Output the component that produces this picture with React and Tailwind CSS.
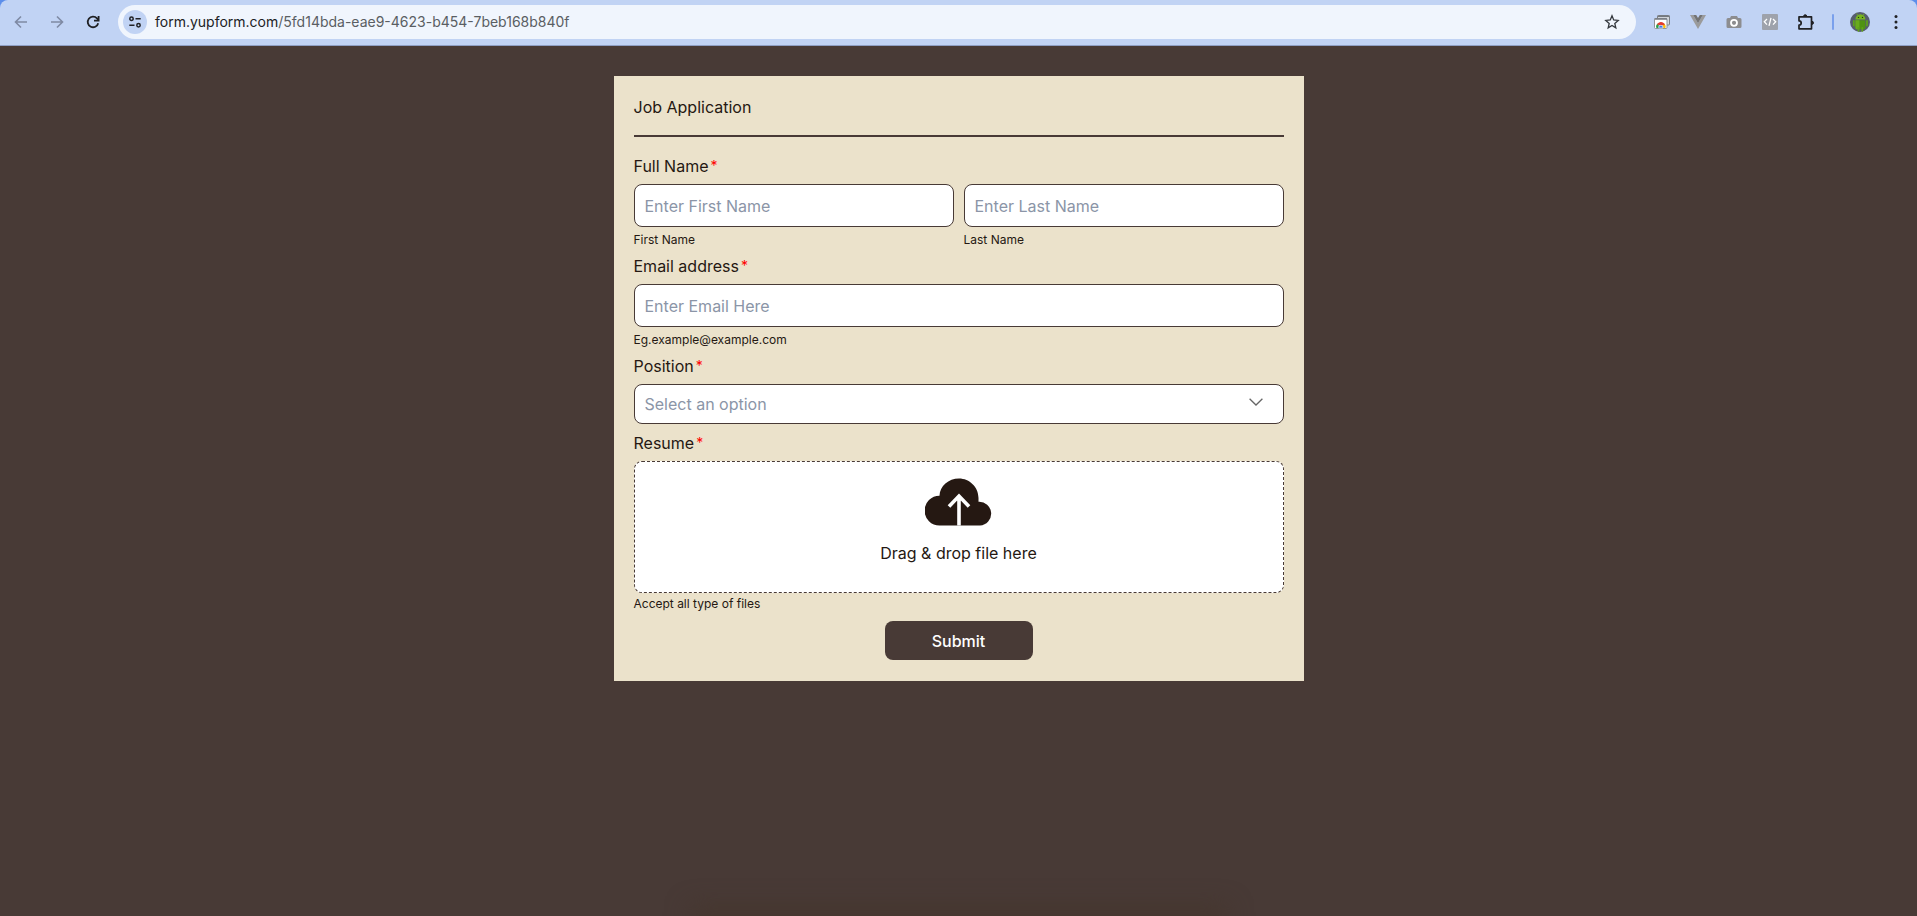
import React, { useState } from 'react';

const URL_HOST = 'form.yupform.com';
const URL_PATH = '/5fd14bda-eae9-4623-b454-7beb168b840f';

const inputClass =
  'w-full h-[43px] px-2.5 rounded-lg border border-[#483a36] bg-white text-base text-[#251812] placeholder:text-[#8b95a7] focus:outline-none';

function IconButton({ label, children }) {
  return (
    <button type="button" aria-label={label} className="flex h-6 w-6 items-center justify-center">
      {children}
    </button>
  );
}

function BrowserBar() {
  return (
    <div className="bg-[#5c8eea]">
      <header className="flex h-[46px] items-center rounded-t-lg border-b border-[#8f9fc4] bg-[#c1d3f4] pr-[9px] pb-px pl-[9px]">
        <nav className="flex items-center gap-3 pr-[13px] text-[#202124]">
          <IconButton label="Back">
            <svg width="14" height="14" viewBox="0 0 14 14" fill="none" stroke="#7f8aa3" strokeWidth="1.6">
              <path d="M13 7H2M7 1.5 1.5 7 7 12.5" />
            </svg>
          </IconButton>
          <IconButton label="Forward">
            <svg width="14" height="14" viewBox="0 0 14 14" fill="none" stroke="#7f8aa3" strokeWidth="1.6">
              <path d="M1 7h11M7 1.5 12.5 7 7 12.5" />
            </svg>
          </IconButton>
          <IconButton label="Reload">
            <svg width="14" height="14" viewBox="0 0 14 14" fill="none" stroke="currentColor" strokeWidth="1.8">
              <path d="M12.2 8.2A5.3 5.3 0 1 1 11 3.4L12.4 5" />
              <path d="M12.6 1v4.6H8" />
            </svg>
          </IconButton>
        </nav>

        <div className="flex h-[34px] flex-1 items-center rounded-full bg-[#f0f5fd] pr-3 pl-[5px]">
          <button
            type="button"
            aria-label="Site information"
            className="flex h-6 w-6 items-center justify-center rounded-full bg-[#c1d3f4]"
          >
            <svg width="14" height="12" viewBox="0 0 14 12" fill="none" stroke="#202124" strokeWidth="1.5">
              <circle cx="3.5" cy="2.7" r="1.7" />
              <path d="M7.5 2.7h5.2M1.3 9.3h5.2" />
              <circle cx="10.5" cy="9.3" r="1.7" />
            </svg>
          </button>
          <p className="flex-1 pl-2 text-sm text-[#5a5e63]">
            <span className="text-[#202124]">{URL_HOST}</span>
            {URL_PATH}
          </p>
          <IconButton label="Bookmark this page">
            <svg width="16" height="16" viewBox="0 0 16 16" fill="none" stroke="#33373d" strokeWidth="1.3" strokeLinejoin="miter">
              <path d="m8 1.8 1.7 4.2 4.5.4-3.4 3 1 4.4L8 11.4l-3.8 2.4 1-4.4-3.4-3L6.3 6z" />
            </svg>
          </IconButton>
        </div>

        <div className="flex items-center gap-3 pl-3.5">
          <IconButton label="Screen capture">
            <svg width="16" height="16" viewBox="0 0 16 16">
              <rect x="3.5" y="1.5" width="12" height="9.5" rx="1" fill="#d5d9de" stroke="#7b8086" />
              <path d="M3.500 2.300h12" stroke="#74797f" strokeWidth="1.500" />
              <rect x=".5" y="4.500" width="12.500" height="10" rx="1" fill="#fff" stroke="#8f959b" />
              <path d="M.5 5h12.500" stroke="#74797f" strokeWidth="1.500" />
              <path d="M2.400 14a4.500 4.500 0 0 1 .9-4.400L6.800 14z" fill="#2ba24c" />
              <path d="M10.400 9.600a4.500 4.500 0 0 1 .9 4.400H6.800z" fill="#fbbc05" />
              <path d="M2.900 10.200a4.700 4.700 0 0 1 8 .3L6.800 12z" fill="#e23b2e" />
              <path d="M4.700 14a2.200 2.200 0 1 1 4.300 0z" fill="#3b78e7" stroke="#fff" strokeWidth=".6" />
            </svg>
          </IconButton>
          <IconButton label="Vue devtools">
            <svg width="16" height="14" viewBox="0 0 16 14">
              <path d="M0 0h3.2L8 8.3 12.8 0H16L8 14z" fill="#9b9b9b" />
              <path d="M3.2 0h3L8 3.1 9.8 0h3L8 8.3z" fill="#747474" />
            </svg>
          </IconButton>
          <IconButton label="Screenshot">
            <svg width="16" height="16" viewBox="0 0 16 16">
              <path d="M5 2h6l1 2h2a1.5 1.5 0 0 1 1.5 1.5v7A1.5 1.5 0 0 1 14 14H2a1.5 1.5 0 0 1-1.5-1.5v-7A1.5 1.5 0 0 1 2 4h2z" fill="#8d8d8f" />
              <circle cx="8" cy="8.8" r="3" fill="#8d8d8f" stroke="#fff" strokeWidth="1.8" />
            </svg>
          </IconButton>
          <IconButton label="Page source">
            <svg width="16" height="16" viewBox="0 0 16 16" fill="none">
              <rect width="16" height="16" rx="1" fill="#9ea2ab" />
              <path d="M5 5 2.3 7.8 5 10.6M11 5l2.7 2.8L11 10.6M9 3.8 7 11.8" stroke="#fff" strokeWidth="1.3" />
            </svg>
          </IconButton>
          <IconButton label="Extensions">
            <svg width="18" height="18" viewBox="0 0 18 18" fill="none" stroke="#202124" strokeWidth="1.7">
              <path d="M2 3.8h12.5v12H2v-3.6a2.2 2.2 0 0 0 0-4.4z" strokeLinejoin="round" />
              <path d="M6.7 3.2a1.5 1.5 0 0 1 3 0zM15 8.3a1.5 1.5 0 0 1 0 3z" fill="#202124" strokeWidth="1" />
            </svg>
          </IconButton>
        </div>

        <span className="ml-3.5 h-4 w-0.5 rounded-full bg-[#7aa0ec]" />

        <div className="flex items-center gap-3 pl-3.5">
          <IconButton label="Profile">
            <svg width="20" height="20" viewBox="0 0 20 20">
              <circle cx="10" cy="10" r="10" fill="#565d6e" />
              <path d="M5.4 7.6a5 5.4 0 0 1 10 0z" fill="#77b61f" />
              <path d="M5.4 8.3h10v7.500a1.5 1.5 0 0 1-1.5 1.5H6.900a1.5 1.5 0 0 1-1.5-1.500z" fill="#4f9312" />
              <path d="M5.400 8.300h4v9h-2.500a1.500 1.500 0 0 1-1.500-1.500z" fill="#69ab1c" />
              <path d="M3.800 9v4.5M17 9v4.5M8.5 16v2.800M12.3 16v2.800" stroke="#5fa31a" strokeWidth="1.8" strokeLinecap="round" />
              <path d="m7.5 3-.9-1.500M13.3 3l.9-1.500" stroke="#77b61f" strokeWidth=".8" />
              <circle cx="8.500" cy="5.400" r=".7" fill="#24400c" />
              <circle cx="12.500" cy="5.400" r=".7" fill="#24400c" />
            </svg>
          </IconButton>
          <IconButton label="Menu">
            <svg width="4" height="16" viewBox="0 0 4 16" fill="#202124">
              <circle cx="2" cy="2.5" r="1.5" />
              <circle cx="2" cy="8" r="1.5" />
              <circle cx="2" cy="13.5" r="1.5" />
            </svg>
          </IconButton>
        </div>
      </header>
    </div>
  );
}

function FieldLabel({ htmlFor, children }) {
  return (
    <label htmlFor={htmlFor} className="mb-1.5 flex h-6 items-center gap-0.5 text-base">
      {children}
      <span className="text-sm text-[#ff0000]">*</span>
    </label>
  );
}

function Hint({ children }) {
  return <p className="pt-1 text-xs leading-[18px]">{children}</p>;
}

export default function App() {
  const [position, setPosition] = useState('');
  const [fileName, setFileName] = useState('');

  return (
    <div className="flex min-h-screen flex-col overflow-hidden bg-[#483a36] font-['Inter','Liberation_Sans',sans-serif]">
      <BrowserBar />

      <main className="flex-1 px-4 py-[30px]">
        <form
          onSubmit={(e) => e.preventDefault()}
          className="mx-auto w-full max-w-[690px] bg-[#ebe2cb] px-5 pt-[19px] pb-[21px] text-[#251812]"
        >
          <h1 className="border-b-2 border-[#483a36] pb-4 text-base">Job Application</h1>

          <div className="mt-[17px] grid grid-cols-2 gap-x-2.5">
            <div className="col-span-2">
              <FieldLabel htmlFor="firstName">Full Name</FieldLabel>
            </div>
            <div>
              <input id="firstName" type="text" placeholder="Enter First Name" className={inputClass} />
              <Hint>First Name</Hint>
            </div>
            <div>
              <input aria-label="Last Name" type="text" placeholder="Enter Last Name" className={inputClass} />
              <Hint>Last Name</Hint>
            </div>
          </div>

          <div className="mt-[5px]">
            <FieldLabel htmlFor="email">Email address</FieldLabel>
            <input id="email" type="email" placeholder="Enter Email Here" className={inputClass} />
            <Hint>Eg.example@example.com</Hint>
          </div>

          <div className="mt-[5px]">
            <FieldLabel htmlFor="position">Position</FieldLabel>
            <div className="relative">
              <select
                id="position"
                value={position}
                onChange={(e) => setPosition(e.target.value)}
                className="block h-10 w-full appearance-none rounded-lg border border-[#483a36] bg-white px-2.5 text-base text-[#8b95a7] focus:outline-none"
              >
                <option value="">Select an option</option>
              </select>
              <svg
                className="pointer-events-none absolute top-3.5 right-[21px]"
                width="14"
                height="8"
                viewBox="0 0 14 8"
                fill="none"
                stroke="#666"
                strokeWidth="1.3"
              >
                <path d="m.6.8 6.4 6.2L13.4.8" />
              </svg>
            </div>
          </div>

          <div className="mt-[7px]">
            <FieldLabel htmlFor="resume">Resume</FieldLabel>
            <label
              htmlFor="resume"
              className="flex h-[132px] cursor-pointer flex-col items-center rounded-lg border border-dashed border-[#483a36] bg-white pt-4"
            >
              <svg width="68" height="48" viewBox="0 0 68 48">
                <path
                  d="M14.5 47.5A14.5 14.5 0 0 1 14.5 17.7C14.8 8 23.5.5 34 .5s19.5 8.5 19.5 19.5v3.7a11.9 11.9 0 0 1 1.5 23.8z"
                  fill="#251812"
                />
                <path d="M34 47.5V18M24 28.5 34 18l10 10.5" fill="none" stroke="#fff" strokeWidth="3.6" />
              </svg>
              <span className="mt-[15px] text-base">{fileName || 'Drag & drop file here'}</span>
              <input
                id="resume"
                type="file"
                className="sr-only"
                onChange={(e) => setFileName(e.target.files[0]?.name || '')}
              />
            </label>
            <p className="pt-0.5 text-xs leading-[18px]">Accept all type of files</p>
          </div>

          <button
            type="submit"
            className="mx-auto mt-2 block h-[39px] w-[148px] rounded-lg bg-[#483a36] text-base font-medium text-white"
          >
            Submit
          </button>
        </form>
      </main>

      {/* faint glow along the bottom edge */}
      <div className="mx-auto h-px w-full max-w-[520px] bg-[#45372f] shadow-[0_0_24px_8px_#45362d]" />
    </div>
  );
}
